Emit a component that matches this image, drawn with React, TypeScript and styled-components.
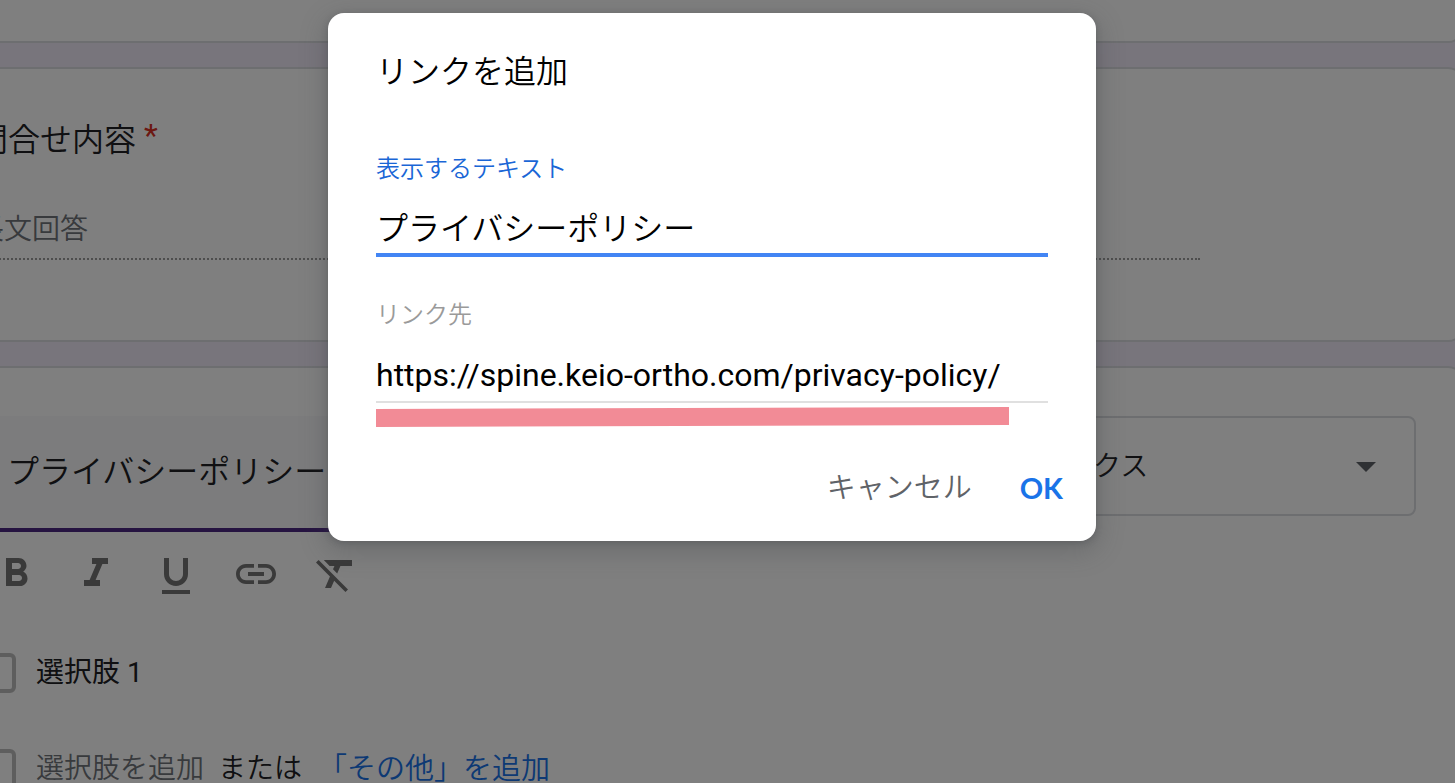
import React from 'react';
import styled, { createGlobalStyle } from 'styled-components';

const GlobalStyle = createGlobalStyle`
  * { box-sizing: border-box; }
  body {
    margin: 0;
    background: #f0ebf8;
    font-family: Roboto, 'Noto Sans CJK JP', sans-serif;
    color: #202124;
  }
  button, input, select { font: inherit; color: inherit; }
`;

const Page = styled.div`
  position: relative;
  height: 100vh;
  overflow: hidden;
`;

const Form = styled.main`
  display: flex;
  flex-direction: column;
  gap: 24px;
  margin: 0 -9px 0 -72px;
`;

const Card = styled.section<{ $first?: boolean; $last?: boolean }>`
  background: #fff;
  border: 2px solid #dadce0;
  border-top-width: ${p => (p.$first ? '0' : '2px')};
  border-radius: ${p => (p.$first ? '0 0 16px 16px' : '16px')};
  padding: ${p => (p.$first ? '41px 46px 0' : p.$last ? '48px 46px' : '47px 46px 80px')};
`;

const QuestionTitle = styled.h2`
  display: flex;
  gap: 8px;
  margin: 0;
  font-size: 32px;
  line-height: 48px;
  font-weight: 350;
`;

const Required = styled.span`
  color: #d93025;
  line-height: 38px;
  font-weight: 400;
`;

const LongAnswer = styled.div`
  margin: 46px 216px 0 0;
  padding-bottom: 8px;
  border-bottom: 2px dotted #9a9a9a;
  font-size: 28px;
  line-height: 40px;
  font-weight: 350;
  color: #70757a;
`;

const EditorHead = styled.div`
  display: flex;
  align-items: flex-start;
  gap: 48px;
`;

const QuestionInput = styled.input`
  flex: 1;
  min-width: 0;
  height: 116px;
  padding: 0 32px 6px 31px;
  border: 0;
  border-bottom: 4px solid #4c2882;
  background: #f8f9fa;
  font-size: 32px;
  font-weight: 350;
  outline: none;
`;

const SelectWrap = styled.div`
  position: relative;
  width: 560px;
`;

const TypeSelect = styled.select`
  appearance: none;
  width: 100%;
  height: 100px;
  padding: 0 64px 0 67px;
  border: 2px solid #dadce0;
  border-radius: 8px;
  background: #fff;
  font-size: 28px;
  font-weight: 350;
`;

const Caret = styled.svg`
  position: absolute;
  right: 40px;
  top: 46px;
  width: 20px;
  height: 10px;
  fill: #5f6368;
  pointer-events: none;
`;

const Toolbar = styled.div`
  display: flex;
  height: 84px;
`;

const ToolButton = styled.button`
  display: flex;
  align-items: center;
  justify-content: center;
  width: 80px;
  height: 84px;
  padding: 0;
  border: 0;
  background: none;
  color: #757575;
  svg { width: 48px; height: 48px; fill: currentColor; }
`;

const Options = styled.div`
  display: flex;
  flex-direction: column;
  gap: 48px;
  margin-top: 33px;
`;

const OptionRow = styled.div`
  display: flex;
  align-items: center;
  height: 48px;
  font-size: 28px;
  font-weight: 350;
`;

const Box = styled.input`
  appearance: none;
  flex: none;
  width: 40px;
  height: 40px;
  margin: 0 20px 0 0;
  border: 4px solid #bdbdbd;
  border-radius: 6px;
`;

const OptionText = styled.input`
  flex: 1;
  padding: 0 0 6px;
  border: 0;
  background: none;
  font-weight: 400;
  outline: none;
`;

const TextButton = styled.button<{ $link?: boolean }>`
  padding: 0;
  border: 0;
  background: none;
  font-size: ${p => (p.$link ? '29px' : '28px')};
  line-height: 40px;
  color: ${p => (p.$link ? '#1a73e8' : '#70757a')};
`;

const Or = styled.span`
  margin: 0 16px 0 14px;
  line-height: 40px;
`;

const Scrim = styled.div`
  position: absolute;
  inset: 0;
  display: flex;
  justify-content: center;
  align-items: flex-start;
  padding: 13px 31px 0 0;
  background: rgba(0, 0, 0, 0.5);
`;

const Dialog = styled.form`
  width: 100%;
  max-width: 768px;
  padding: 35px 0 25px;
  border-radius: 16px;
  background: #fff;
  color: #000;
  box-shadow: 0 2px 6px rgba(60, 64, 67, 0.3), 0 8px 24px 4px rgba(60, 64, 67, 0.25);
`;

const DialogTitle = styled.h1`
  margin: 0 48px 57px;
  font-size: 32px;
  line-height: 48px;
  font-weight: 350;
`;

const Field = styled.div`
  position: relative;
  display: flex;
  flex-direction: column;
  gap: 20px;
  margin: 0 48px 42px;
`;

const FieldLabel = styled.label<{ $active?: boolean }>`
  font-size: 24px;
  line-height: 32px;
  font-weight: 350;
  color: ${p => (p.$active ? '#1a66d6' : '#9a9a9a')};
`;

const FieldInput = styled.input<{ $active?: boolean }>`
  width: 100%;
  height: 52px;
  padding: 0 0 ${p => (p.$active ? '6px' : '2px')};
  border: 0;
  border-bottom: ${p => (p.$active ? '4px solid #4285f4' : '2px solid #e0e0e0')};
  background: none;
  font-size: 32px;
  font-weight: ${p => (p.$active ? 350 : 400)};
  outline: none;
`;

const Marker = styled.svg`
  position: absolute;
  left: 0;
  top: 108px;
  width: 633px;
  height: 20px;
  fill: #f28b96;
`;

const Actions = styled.div`
  display: flex;
  justify-content: flex-end;
  gap: 16px;
  padding: 15px 17px 0 0;
`;

const ActionButton = styled.button<{ $primary?: boolean }>`
  height: 56px;
  padding: 0 16px;
  border: 0;
  background: none;
  font-size: 29px;
  line-height: 40px;
  font-family: ${p => (p.$primary ? 'Lato, sans-serif' : 'inherit')};
  font-weight: ${p => (p.$primary ? 700 : 350)};
  color: ${p => (p.$primary ? '#1a73e8' : '#5f6368')};
`;

const tools = [
  { label: '太字', path: 'M15.6 10.79c.97-.67 1.65-1.77 1.65-2.79 0-2.26-1.75-4-4-4H7v14h7.04c2.09 0 3.71-1.7 3.71-3.79 0-1.52-.86-2.82-2.15-3.42zM10 6.5h3c.83 0 1.5.67 1.5 1.5s-.67 1.5-1.5 1.5h-3v-3zm3.5 9H10v-3h3.5c.83 0 1.5.67 1.5 1.5s-.67 1.5-1.5 1.5z' },
  { label: '斜体', path: 'M10 4v3h2.21l-3.42 8H6v3h8v-3h-2.21l3.42-8H18V4z' },
  { label: '下線', path: 'M12 18c3.31 0 6-2.69 6-6V4h-2.5v8c0 1.93-1.57 3.5-3.5 3.5S8.5 13.93 8.5 12V4H6v8c0 3.31 2.69 6 6 6zM5 20v2h14v-2H5z' },
  { label: 'リンクを挿入', path: 'M3.9 12c0-1.71 1.39-3.1 3.1-3.1h4V7H7c-2.76 0-5 2.24-5 5s2.24 5 5 5h4v-1.9H7c-1.71 0-3.1-1.39-3.1-3.1zM8 13h8v-2H8v2zm9-6h-4v1.9h4c1.71 0 3.1 1.39 3.1 3.1s-1.39 3.1-3.1 3.1h-4V17h4c2.76 0 5-2.24 5-5s-2.24-5-5-5z' },
  { label: '書式をクリア', path: 'M3.27 5L2 6.27l6.97 6.97L6.5 19h3l1.57-3.66L16.73 21 18 19.73 3.55 5.27 3.27 5zM6 5v.18L8.82 8h2.4l-.72 1.68 2.1 2.1L14.21 8H20V5H6z' },
];

export default function App() {
  return (
    <Page>
      <GlobalStyle />
      <Form>
        <Card $first />
        <Card>
          <QuestionTitle>
            問合せ内容<Required>*</Required>
          </QuestionTitle>
          <LongAnswer>長文回答</LongAnswer>
        </Card>
        <Card $last>
          <EditorHead>
            <QuestionInput aria-label="質問" defaultValue="プライバシーポリシー" />
            <SelectWrap>
              <TypeSelect aria-label="質問の形式">
                <option>チェックボックス</option>
              </TypeSelect>
              <Caret viewBox="0 0 20 10"><path d="M0 0h20L10 10z" /></Caret>
            </SelectWrap>
          </EditorHead>
          <Toolbar>
            {tools.map(t => (
              <ToolButton key={t.label} type="button" aria-label={t.label}>
                <svg viewBox="0 0 24 24"><path d={t.path} /></svg>
              </ToolButton>
            ))}
          </Toolbar>
          <Options>
            <OptionRow>
              <Box type="checkbox" aria-label="選択肢 1" />
              <OptionText aria-label="選択肢" defaultValue="選択肢 1" />
            </OptionRow>
            <OptionRow>
              <Box type="checkbox" aria-label="新しい選択肢" />
              <TextButton type="button">選択肢を追加</TextButton>
              <Or>または</Or>
              <TextButton type="button" $link>「その他」を追加</TextButton>
            </OptionRow>
          </Options>
        </Card>
      </Form>
      <Scrim>
        <Dialog role="dialog" aria-labelledby="dialog-title" onSubmit={e => e.preventDefault()}>
          <DialogTitle id="dialog-title">リンクを追加</DialogTitle>
          <Field>
            <FieldLabel htmlFor="link-text" $active>表示するテキスト</FieldLabel>
            <FieldInput id="link-text" $active defaultValue="プライバシーポリシー" />
          </Field>
          <Field>
            <FieldLabel htmlFor="link-url">リンク先</FieldLabel>
            <FieldInput id="link-url" defaultValue="https://spine.keio-ortho.com/privacy-policy/" />
            <Marker viewBox="0 0 633 20"><path d="M0 2L633 0V18L0 20z" /></Marker>
          </Field>
          <Actions>
            <ActionButton type="button">キャンセル</ActionButton>
            <ActionButton type="submit" $primary>OK</ActionButton>
          </Actions>
        </Dialog>
      </Scrim>
    </Page>
  );
}
